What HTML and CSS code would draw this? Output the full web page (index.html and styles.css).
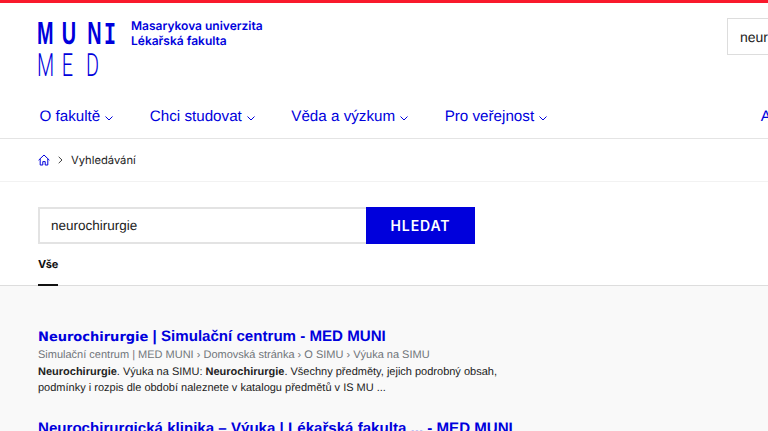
FILE: index.html
```html
<!DOCTYPE html>
<html lang="cs">
<head>
    <meta charset="UTF-8">
    <title>Vyhledávání</title>
    <link rel="stylesheet" href="styles.css">
</head>
<body>
    <div class="top-bar"></div>
    <header class="header">
        <a class="logo" href="#">
            <svg class="logo-mark" width="82" height="60" viewBox="0 0 82 60">
                <text class="logo-muni" transform="translate(-1 26) scale(.62 1)" y="0" x="0 40 81"><tspan>MUN</tspan><tspan class="logo-i" x="108">I</tspan></text>
                <text class="logo-med" transform="translate(-1 58) scale(.62 1)" y="0" x="0 40 79">MED</text>
            </svg>
            <span class="logo-text">Masarykova univerzita<br>Lékařská fakulta</span>
        </a>
        <input class="header-search" type="text" value="neurochirurgie">
    </header>
    <nav class="menu">
        <a href="#">O fakultě <svg class="chevron" width="8" height="5" viewBox="0 0 8 5"><path d="M.5.5 4 4 7.5.5"/></svg></a>
        <a href="#">Chci studovat <svg class="chevron" width="8" height="5" viewBox="0 0 8 5"><path d="M.5.5 4 4 7.5.5"/></svg></a>
        <a href="#">Věda a výzkum <svg class="chevron" width="8" height="5" viewBox="0 0 8 5"><path d="M.5.5 4 4 7.5.5"/></svg></a>
        <a href="#">Pro veřejnost <svg class="chevron" width="8" height="5" viewBox="0 0 8 5"><path d="M.5.5 4 4 7.5.5"/></svg></a>
        <a class="menu-last" href="#">Aktuality</a>
    </nav>
    <div class="breadcrumbs">
        <svg class="home" width="12" height="12" viewBox="0 0 12 12"><path d="M.6 6.2 6 1l5.4 5.2M2.2 5v6h2.6V7.6h2.4V11h2.6V5"/></svg>
        <svg class="crumb-arrow" width="5" height="8" viewBox="0 0 5 8"><path d="M.7.8 4 4 .7 7.2"/></svg>
        <span>Vyhledávání</span>
    </div>
    <section class="search">
        <form class="search-form">
            <input class="search-input" type="text" value="neurochirurgie">
            <button class="search-button" type="button">HLEDAT</button>
        </form>
        <div class="tabs"><a class="tab" href="#">Vše</a></div>
    </section>
    <main class="results">
        <article class="result">
            <h2><a href="#"><b>Neurochirurgie</b> | Simulační centrum - MED MUNI</a></h2>
            <p class="result-path">Simulační centrum | MED MUNI › Domovská stránka › O SIMU › Výuka na SIMU</p>
            <p class="result-text"><strong>Neurochirurgie</strong>. Výuka na SIMU: <strong>Neurochirurgie</strong>. Všechny předměty, jejich podrobný obsah, podmínky i rozpis dle období naleznete v katalogu předmětů v IS MU ...</p>
        </article>
        <article class="result">
            <h2><a href="#">Neurochirurgická klinika – Výuka | Lékařská fakulta ... - MED MUNI</a></h2>
        </article>
    </main>
</body>
</html>
```

FILE: styles.css
```css
html, body {
    height: 431px;
    overflow: hidden;
}

body {
    margin: 0;
    background-color: #fff;
    font-family: Inter, sans-serif;
    color: #222;
    text-rendering: geometricPrecision;
}

a {
    color: #0000dc;
    text-decoration: none;
}

.top-bar {
    height: 3px;
    background-color: #f9192c;
}

.header {
    display: flex;
    justify-content: space-between;
    height: 92px;
    padding-left: 38px;
    box-sizing: border-box;
    width: 768px;
}

.logo {
    display: flex;
    gap: 11px;
    padding-top: 15px;
}

.logo-mark {
    overflow: visible;
    fill: #0000dc;
}

.logo-muni {
    font-family: "Liberation Sans", sans-serif;
    font-size: 32px;
    font-weight: 700;
}

.logo-i {
    font-family: "Liberation Mono", monospace;
}

.logo-med {
    font-family: Roboto, sans-serif;
    font-size: 32px;
    font-weight: 300;
}

.logo-text {
    font-size: 12px;
    font-weight: 600;
    line-height: 15px;
}

.header-search {
    width: 140px;
    height: 37px;
    margin: 15px -99px 0 0;
    padding: 0 12px;
    box-sizing: border-box;
    flex: none;
    border: 1px solid #ddd;
    background: #fff;
    font-family: "Liberation Sans", sans-serif;
    font-size: 14px;
    color: #222;
    outline: none;
    text-rendering: geometricPrecision;
}

.menu {
    display: flex;
    gap: 36.5px;
    height: 43px;
    padding-left: 39.5px;
    border-bottom: 1px solid #e4e4e4;
    white-space: nowrap;
    font-family: "Liberation Sans", sans-serif;
    font-size: 15.2px;
}

.menu a {
    display: flex;
    align-items: center;
    gap: 5px;
    height: 43px;
}

.menu .menu-last {
    margin-left: 177px;
}

.chevron {
    fill: none;
    stroke: #0000dc;
    stroke-width: 1;
    margin-top: 3px;
}

.breadcrumbs {
    display: flex;
    align-items: center;
    height: 42px;
    padding-left: 38px;
    border-bottom: 1px solid #f2f2f2;
    font-size: 11.2px;
}

.home {
    fill: none;
    stroke: #0000dc;
    stroke-width: 1;
}

.crumb-arrow {
    fill: none;
    stroke: #444;
    stroke-width: 1;
    margin: 0 8px 0 8px;
}

.search {
    height: 104px;
    border-bottom: 1px solid #ddd;
    box-sizing: border-box;
    padding: 25px 0 0 38px;
}

.search-form {
    display: flex;
    height: 37px;
    width: 437px;
}

.search-input {
    flex: 1;
    min-width: 0;
    box-sizing: border-box;
    border: 2px solid #e3e3e3;
    border-right: 0;
    padding: 0 11px;
    font-family: "Liberation Sans", sans-serif;
    font-size: 13.5px;
    color: #222;
    outline: none;
    text-rendering: geometricPrecision;
}

.search-button {
    width: 109px;
    border: 0;
    background-color: #0000dc;
    color: #fff;
    font-family: Inter, sans-serif;
    font-size: 14px;
    font-weight: 600;
    letter-spacing: .9px;
}

.tabs {
    height: 28px;
    margin-top: 12px;
}

.tab {
    display: block;
    width: fit-content;
    height: 28px;
    border-bottom: 2px solid #111;
    color: #111;
    font-size: 11px;
    font-weight: 700;
    line-height: 16px;
}

.results {
    height: 200px;
    padding: 41px 0 0 38px;
    background-color: #f9f9f9;
}

.result {
    width: 460px;
    margin-bottom: 23px;
    font-family: "Liberation Sans", sans-serif;
}

.result h2 {
    margin: 0 0 -1px;
    font-size: 15.1px;
    font-weight: 700;
    line-height: 19px;
    white-space: nowrap;
}

.result h2 b {
    font-family: "DejaVu Sans", sans-serif;
    font-size: 13px;
}

.result-path {
    margin: 0;
    font-size: 11px;
    line-height: 18px;
    color: #70757a;
}

.result-text {
    margin: 0;
    font-size: 11px;
    line-height: 16px;
    color: #222;
}
```
